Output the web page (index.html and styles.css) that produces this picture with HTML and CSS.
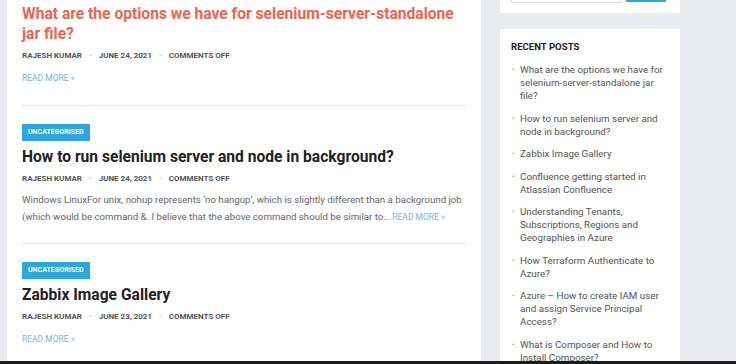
FILE: index.html
```html
<!DOCTYPE html>
<html lang="en">
<head>
  <meta charset="UTF-8">
  <meta name="viewport" content="width=device-width, initial-scale=1.0">
  <title>Blog</title>
  <link rel="stylesheet" href="styles.css">
</head>
<body>
  <div class="page">
    <!-- Posts -->
    <main class="content">
      <article class="post">
        <h2 class="post-title accent">What are the options we have for selenium-server-standalone jar file?</h2>
        <div class="meta">
          <span>Rajesh Kumar</span><span class="dot">•</span><span>June 24, 2021</span><span class="dot">•</span><span>Comments Off</span>
        </div>
        <a href="#" class="more">Read More »</a>
      </article>

      <article class="post">
        <a href="#" class="badge">Uncategorised</a>
        <h2 class="post-title">How to run selenium server and node in background?</h2>
        <div class="meta">
          <span>Rajesh Kumar</span><span class="dot">•</span><span>June 24, 2021</span><span class="dot">•</span><span>Comments Off</span>
        </div>
        <p class="excerpt">Windows LinuxFor unix, nohup represents ‘no hangup’, which is slightly different than a background job (which would be command &amp;. I believe that the above command should be similar to… <a href="#" class="more inline">Read More »</a></p>
      </article>

      <article class="post last">
        <a href="#" class="badge">Uncategorised</a>
        <h2 class="post-title">Zabbix Image Gallery</h2>
        <div class="meta">
          <span>Rajesh Kumar</span><span class="dot">•</span><span>June 23, 2021</span><span class="dot">•</span><span>Comments Off</span>
        </div>
        <a href="#" class="more">Read More »</a>
      </article>
    </main>

    <!-- Sidebar -->
    <aside class="sidebar">
      <div class="widget search">
        <input type="text" class="search-field">
        <button class="search-btn"></button>
      </div>
      <div class="widget recent">
        <h3 class="widget-title">Recent Posts</h3>
        <ul>
          <li><a href="#">What are the options we have for selenium-server-standalone jar file?</a></li>
          <li><a href="#">How to run selenium server and node in background?</a></li>
          <li><a href="#">Zabbix Image Gallery</a></li>
          <li><a href="#">Confluence getting started in Atlassian Confluence</a></li>
          <li><a href="#">Understanding Tenants, Subscriptions, Regions and Geographies in Azure</a></li>
          <li><a href="#">How Terraform Authenticate to Azure?</a></li>
          <li><a href="#">Azure – How to create IAM user and assign Service Principal Access?</a></li>
          <li><a href="#">What is Composer and How to Install Composer?</a></li>
        </ul>
      </div>
    </aside>
  </div>
  <div class="taskbar"></div>
</body>
</html>
```

FILE: styles.css
```css
body {
  margin: 0;
  background-color: #e9ebee;
  font-family: Roboto, "Liberation Sans", Arial, sans-serif;
  height: 364px;
  overflow: hidden;
  position: relative;
}

a {
  text-decoration: none;
}

.page {
  display: flex;
  align-items: flex-start;
  gap: 19px;
  padding-left: 7px;
}

/* Main column */
.content {
  width: 474px;
  box-sizing: border-box;
  background-color: #fff;
  padding: 4px 15px 30px 15px;
}

.post {
  border-bottom: 1px solid #e6e6e6;
  padding-bottom: 18px;
  margin-bottom: 18px;
}

.post.last {
  border-bottom: none;
}

.post-title {
  margin: 0;
  font-size: 15.6px;
  line-height: 20px;
  font-weight: 700;
  color: #222;
}

.post-title.accent {
  color: #ec6550;
}

.badge {
  display: block;
  width: max-content;
  background-color: #2ea6de;
  color: #fff;
  font-size: 7px;
  font-weight: 700;
  text-transform: uppercase;
  line-height: 17px;
  padding: 0 6px;
  margin-bottom: 6px;
}

.meta {
  margin-top: 6px;
  font-size: 8px;
  line-height: 12px;
  font-weight: 700;
  text-transform: uppercase;
  color: #555;
}

.meta .dot {
  color: #c4c4c4;
  margin: 0 7px;
  font-weight: 400;
}

.more {
  display: block;
  margin: 10px 0 3px;
  font-size: 8.5px;
  line-height: 12px;
  text-transform: uppercase;
  color: #7ab2de;
}

.more.inline {
  display: inline;
  margin: 0;
}

.excerpt {
  margin: 6px 0 0;
  font-size: 9.7px;
  line-height: 17px;
  color: #666;
}

/* Sidebar */
.sidebar {
  width: 180px;
  display: flex;
  flex-direction: column;
  gap: 16px;
}

.widget {
  background-color: #fff;
}

.search {
  height: 13px;
  display: flex;
  align-items: flex-start;
  gap: 4px;
  padding: 0 14px 0 11px;
  overflow: hidden;
}

.search-field {
  width: 109px;
  height: 2px;
  margin: 0;
  padding: 0;
  border: 1px solid #ddd;
  border-top: none;
}

.search-btn {
  width: 42px;
  height: 2px;
  margin: 0;
  padding: 0;
  border: none;
  background-color: #2ea6de;
}

.recent {
  padding: 12px 12px 20px 11px;
}

.widget-title {
  margin: 0 0 10px;
  font-size: 9.6px;
  line-height: 12px;
  font-weight: 700;
  text-transform: uppercase;
  color: #222;
}

.recent ul {
  margin: 0;
  padding: 0;
  list-style: none;
}

.recent li {
  position: relative;
  padding-left: 9px;
  font-size: 9.8px;
  line-height: 13px;
  margin-bottom: 9.5px;
}

.recent li::before {
  content: "•";
  position: absolute;
  left: 1px;
  top: 0;
  color: #e8877a;
  font-size: 8px;
}

.recent li a {
  color: #555;
}

.taskbar {
  position: absolute;
  left: 0;
  right: 0;
  bottom: 0;
  height: 3px;
  background-color: #1c1c1c;
}
```
